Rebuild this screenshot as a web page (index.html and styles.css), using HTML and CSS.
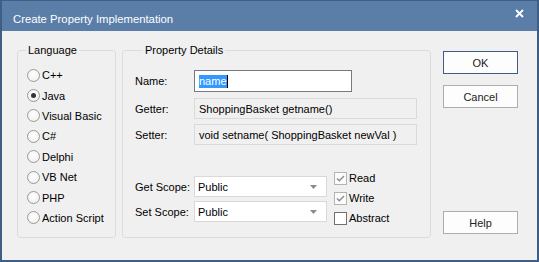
FILE: index.html
```html
<!DOCTYPE html>
<html>
<head>
<meta charset="utf-8">
<link rel="stylesheet" href="styles.css">
</head>
<body>
<div class="window">
  <div class="titlebar">
    <span class="title">Create Property Implementation</span>
    <svg class="close" width="9" height="9" viewBox="0 0 9 9"><path d="M1 1 L8 8 M8 1 L1 8" stroke="#fff" stroke-width="1.8" fill="none"/></svg>
  </div>
  <div class="content">
    <div class="group lang">
      <span class="group-title">Language</span>
      <div class="radios">
        <div class="radio-row"><span class="radio"></span>C++</div>
        <div class="radio-row"><span class="radio checked"></span>Java</div>
        <div class="radio-row"><span class="radio"></span>Visual Basic</div>
        <div class="radio-row"><span class="radio"></span>C#</div>
        <div class="radio-row"><span class="radio"></span>Delphi</div>
        <div class="radio-row"><span class="radio"></span>VB Net</div>
        <div class="radio-row"><span class="radio"></span>PHP</div>
        <div class="radio-row"><span class="radio"></span>Action Script</div>
      </div>
    </div>
    <div class="group props">
      <span class="group-title">Property Details</span>
      <div class="prop-row name-row">
        <span class="prop-label">Name:</span>
        <div class="name-input"><span class="sel">name</span><span class="caret"></span></div>
      </div>
      <div class="prop-row getter-row">
        <span class="prop-label">Getter:</span>
        <div class="readonly">ShoppingBasket getname()</div>
      </div>
      <div class="prop-row setter-row">
        <span class="prop-label">Setter:</span>
        <div class="readonly">void setname( ShoppingBasket newVal )</div>
      </div>
      <div class="scope-area">
        <div class="scopes">
          <div class="prop-row">
            <span class="prop-label">Get Scope:</span>
            <div class="combo"><span>Public</span><svg width="7" height="4" viewBox="0 0 7 4"><path d="M0 0 L7 0 L3.5 4 Z" fill="#8a8a8a"/></svg></div>
          </div>
          <div class="prop-row set-row">
            <span class="prop-label">Set Scope:</span>
            <div class="combo"><span>Public</span><svg width="7" height="4" viewBox="0 0 7 4"><path d="M0 0 L7 0 L3.5 4 Z" fill="#8a8a8a"/></svg></div>
          </div>
        </div>
        <div class="checks">
          <div class="check-row"><span class="check on"><svg width="11" height="11" viewBox="0 0 11 11"><path d="M2 5.5 L4.3 7.8 L9 3" stroke="#8c8c8c" stroke-width="1.4" fill="none"/></svg></span>Read</div>
          <div class="check-row"><span class="check on"><svg width="11" height="11" viewBox="0 0 11 11"><path d="M2 5.5 L4.3 7.8 L9 3" stroke="#8c8c8c" stroke-width="1.4" fill="none"/></svg></span>Write</div>
          <div class="check-row"><span class="check off"></span>Abstract</div>
        </div>
      </div>
    </div>
    <div class="buttons">
      <button class="btn default">OK</button>
      <button class="btn">Cancel</button>
      <button class="btn help">Help</button>
    </div>
  </div>
</div>
</body>
</html>
```

FILE: styles.css
```css
* { box-sizing: border-box; }
body {
  margin: 0;
  font-family: "Liberation Sans", Arial, sans-serif;
  font-size: 11px;
  color: #000;
}
.window {
  width: 539px;
  height: 262px;
  border-style: solid;
  border-color: #3e5e86;
  border-width: 1px 2px 2px 2px;
  background: #f0f0f0;
  display: flex;
  flex-direction: column;
}
.titlebar {
  height: 30px;
  flex: none;
  background: #5a7ea8;
  color: #fff;
  display: flex;
  align-items: center;
  justify-content: space-between;
  padding: 5px 0 0 11px;
  font-family: "Liberation Sans", Arial, sans-serif;
  font-size: 11.3px;
}
.close {
  margin: -10px 13px 0 0;
}
.content {
  flex: 1;
  display: flex;
  align-items: flex-start;
  padding: 19px 0 0 15px;
}
.group {
  border: 1px solid #dcdcdc;
  border-radius: 3px;
  display: flex;
  flex-direction: column;
  height: 188px;
}
.group-title {
  align-self: flex-start;
  margin: -7px 0 0 8px;
  padding: 0 2px;
  background: #f0f0f0;
  line-height: 13px;
}
.lang {
  width: 99px;
  margin-right: 6px;
}
.radios {
  margin-top: 8px;
  padding-left: 9px;
}
.radio-row {
  height: 20.4px;
  display: flex;
  align-items: center;
}
.radio {
  width: 13px;
  height: 13px;
  border-radius: 50%;
  border: 1px solid #9a9a9a;
  background: radial-gradient(circle at 50% 40%, #ffffff 0%, #f4f4f4 60%, #e6e6e6 100%);
  margin-right: 2px;
  display: flex;
  align-items: center;
  justify-content: center;
}
.radio.checked::after {
  content: "";
  width: 5px;
  height: 5px;
  border-radius: 50%;
  background: #333;
}
.props {
  width: 309px;
  margin-right: 12px;
  padding: 0 12px;
}
.prop-row {
  display: flex;
  align-items: center;
}
.prop-label {
  width: 59px;
  flex: none;
}
.name-row { margin-top: 13px; }
.getter-row { margin-top: 6px; }
.setter-row { margin-top: 5px; }
.name-input {
  width: 158px;
  height: 22px;
  border: 1px solid #7a7a7a;
  background: #fff;
  padding-left: 4px;
  display: flex;
  align-items: center;
}
.sel {
  background: #3399ff;
  color: #fff;
  line-height: 13px;
}
.caret {
  width: 1px;
  height: 13px;
  background: #000;
}
.readonly {
  width: 223px;
  height: 21px;
  border: 1px solid #dadada;
  background: #f0f0f0;
  padding-left: 4px;
  display: flex;
  align-items: center;
}
.scope-area {
  display: flex;
  margin-top: 23px;
}
.scopes {
  padding-top: 8px;
}
.set-row { margin-top: 4px; }
.combo {
  width: 133px;
  height: 21px;
  border: 1px solid #d9d9d9;
  background: #fff;
  padding: 0 9px 0 3px;
  display: flex;
  align-items: center;
  justify-content: space-between;
}
.checks {
  margin-left: 7px;
}
.check-row {
  height: 20px;
  display: flex;
  align-items: center;
}
.check {
  width: 13px;
  height: 13px;
  margin-right: 2px;
  background: #fff;
  display: flex;
  align-items: center;
  justify-content: center;
}
.check.on { border: 1px solid #b4b4b4; background: #fbfbfb; }
.check.off { border: 1px solid #707070; }
.buttons {
  display: flex;
  flex-direction: column;
  width: 75px;
  height: 183px;
  margin-top: 1px;
}
.btn {
  width: 75px;
  height: 23px;
  border: 1px solid #adadad;
  background: #fdfdfd;
  color: #222;
  font-family: "Liberation Sans", Arial, sans-serif;
  font-size: 11px;
  padding: 0;
  margin-bottom: 11px;
}
.btn.default { border-color: #3d5f87; }
.btn.help { margin-top: auto; margin-bottom: 0; }
```
